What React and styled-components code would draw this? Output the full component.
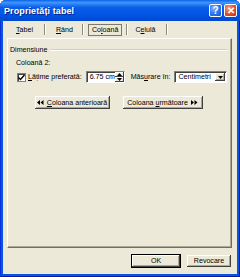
import React from 'react'
import styled, { createGlobalStyle } from 'styled-components'

const GlobalStyle = createGlobalStyle`
html, body {
  margin: 0;
  padding: 0;
  background: #ffffff;
}
* {
  box-sizing: border-box;
}
`

const Window = styled.div`
width: 240px;
height: 277px;
display: flex;
flex-direction: column;
background: #0a55e0;
border-radius: 6px 6px 0 0;
box-shadow: inset 1px 0 #0831d9, inset -1px 0 #001ea0, inset 0 -1px #001ea0;
font-family: "Liberation Sans", Arial, sans-serif;
font-size: 7.1px;
color: #000;
overflow: hidden;
`

const TitleBar = styled.div`
height: 21px;
display: flex;
align-items: center;
padding: 0 3px 0 4px;
background: linear-gradient(#0b62e8 0%, #3d95ff 12%, #0a5ee6 35%, #0055e5 70%, #0048d0 100%);
`

const Title = styled.div`
flex: 1;
color: #ffffff;
font-size: 9px;
font-weight: bold;
text-shadow: 1px 1px #0a1e80;
letter-spacing: 0.1px;
`

const CaptionButton = styled.div`
width: 13px;
height: 13px;
margin-left: 2px;
border: 1px solid #ffffff;
border-radius: 2px;
display: flex;
align-items: center;
justify-content: center;
color: #ffffff;
font-weight: bold;
font-size: 10px;
line-height: 1;
background: ${p => p.$close
  ? 'radial-gradient(circle at 35% 30%, #f0a080, #e0502a 55%, #c03010)'
  : 'radial-gradient(circle at 35% 30%, #7eb4ff, #2c73f0 55%, #1850d0)'};
`

const Client = styled.div`
flex: 1;
margin: 0 3px 3px 3px;
background: #ece9d8;
display: flex;
flex-direction: column;
`

const TabStrip = styled.div`
height: 17px;
display: flex;
align-items: center;
padding-left: 9px;
`

const Tab = styled.div`
padding: 1px 3px;
border: 1px solid ${p => (p.$active ? '#7a7a70' : 'transparent')};
line-height: 8px;
`

const TabSep = styled.div`
width: 1px;
height: 11px;
margin: 0 ${p => p.$m || 6}px;
background: #8c8a80;
box-shadow: 1px 0 #ffffff;
`

const Key = styled.span`
text-decoration: underline;
`

const Panel = styled.div`
flex: 1;
margin: 0 5px 0 4px;
padding: 3px 4px 0 2px;
border-top: 1px solid #ffffff;
border-left: 1px solid #ffffff;
border-right: 1px solid #716f64;
border-bottom: 1px solid #716f64;
box-shadow: inset -1px -1px #aca899;
display: flex;
flex-direction: column;
`

const GroupHeader = styled.div`
display: flex;
align-items: center;
height: 11px;
margin-top: 2px;
`

const GroupLine = styled.div`
flex: 1;
height: 2px;
margin-left: 3px;
border-top: 1px solid #d0d0bf;
border-bottom: 1px solid #ffffff;
`

const Caption = styled.div`
margin: 3px 0 0 6px;
height: 10px;
line-height: 10px;
`

const ControlRow = styled.div`
display: flex;
align-items: center;
margin: 2px 0 0 7px;
height: 14px;
`

const CheckBox = styled.div`
width: 9px;
height: 9px;
background: #ffffff;
border: 1px solid #808080;
box-shadow: inset 1px 1px #404040;
display: flex;
align-items: center;
justify-content: center;
margin-right: 2px;
`

const Label = styled.span`
white-space: nowrap;
margin-right: ${p => p.$gap || 0}px;
`

const Field = styled.div`
display: flex;
align-items: stretch;
width: ${p => p.$w}px;
height: 12px;
background: #ffffff;
border-top: 1px solid #808080;
border-left: 1px solid #808080;
border-right: 1px solid #ffffff;
border-bottom: 1px solid #ffffff;
box-shadow: inset 1px 1px #404040;
margin-right: ${p => p.$gap || 0}px;
`

const FieldText = styled.div`
flex: 1;
padding: 1px 0 0 3px;
line-height: 9px;
white-space: nowrap;
overflow: hidden;
`

const Spinner = styled.div`
width: 9px;
display: flex;
flex-direction: column;
`

const SpinButton = styled.div`
flex: 1;
background: #ece9d8;
box-shadow: inset -1px -1px #404040, inset 1px 1px #ffffff;
display: flex;
align-items: center;
justify-content: center;
`

const DropButton = styled.div`
width: 10px;
margin: 1px;
background: #ece9d8;
box-shadow: inset -1px -1px #404040, inset 1px 1px #ffffff, inset -2px -2px #aca899;
display: flex;
align-items: center;
justify-content: center;
`

const NavRow = styled.div`
display: flex;
justify-content: center;
gap: 11px;
margin-top: 11px;
`

const Button = styled.div`
height: ${p => p.$h || 15}px;
width: ${p => p.$w}px;
display: flex;
align-items: center;
justify-content: center;
gap: 3px;
background: #ece9d8;
border: 1px solid ${p => (p.$default ? '#000000' : '#ece9d8')};
box-shadow: inset -1px -1px #404040, inset 1px 1px #ffffff, inset -2px -2px #aca899;
white-space: nowrap;
`

const Footer = styled.div`
height: 26px;
display: flex;
align-items: center;
justify-content: flex-end;
gap: 5px;
padding-right: 5px;
`

const Tri = ({ dir }) => (
  <svg width="5" height="3" viewBox="0 0 5 3">
    {dir === 'up'
      ? <path d="M2.5 0 L5 3 L0 3 Z" fill="#000" />
      : <path d="M0 0 L5 0 L2.5 3 Z" fill="#000" />}
  </svg>
)

const Double = ({ dir }) => (
  <svg width="7" height="5" viewBox="0 0 7 5">
    {dir === 'left'
      ? <path d="M0 2.5 L3 0 L3 5 Z M3.5 2.5 L6.5 0 L6.5 5 Z" fill="#000" />
      : <path d="M0 0 L3 2.5 L0 5 Z M3.5 0 L6.5 2.5 L3.5 5 Z" fill="#000" />}
  </svg>
)

const tabs = [
  { label: 'Tabel', key: 'T', rest: 'abel', m: 7 },
  { label: 'Rând', key: 'R', rest: 'ând', m: 5 },
  { label: 'Coloană', pre: 'Co', key: 'l', rest: 'oană', active: true, m: 4 },
  { label: 'Celulă', pre: 'C', key: 'e', rest: 'lulă', m: 6 },
]

const App = () => {
  return (
    <>
      <GlobalStyle />
      <Window>
        <TitleBar>
          <Title>Proprietăți tabel</Title>
          <CaptionButton>?</CaptionButton>
          <CaptionButton $close>✕</CaptionButton>
        </TitleBar>
        <Client>
          <TabStrip>
            {tabs.map(t => (
              <React.Fragment key={t.label}>
                <Tab $active={t.active}>
                  {t.pre}<Key>{t.key}</Key>{t.rest}
                </Tab>
                <TabSep $m={t.m} />
              </React.Fragment>
            ))}
          </TabStrip>
          <Panel>
            <GroupHeader>
              <span>Dimensiune</span>
              <GroupLine />
            </GroupHeader>
            <Caption>Coloană 2:</Caption>
            <ControlRow>
              <CheckBox>
                <svg width="7" height="7" viewBox="0 0 7 7">
                  <path d="M0.5 3.5 L2.5 5.5 L6.5 1" stroke="#000" strokeWidth="1.4" fill="none" />
                </svg>
              </CheckBox>
              <Label $gap={4}><Key>L</Key>ățime preferată:</Label>
              <Field $w={39} $gap={6}>
                <FieldText>6.75 cm</FieldText>
                <Spinner>
                  <SpinButton><Tri dir="up" /></SpinButton>
                  <SpinButton><Tri dir="down" /></SpinButton>
                </Spinner>
              </Field>
              <Label $gap={4}>Măs<Key>u</Key>rare în:</Label>
              <Field $w={55}>
                <FieldText>Centimetri</FieldText>
                <DropButton><Tri dir="down" /></DropButton>
              </Field>
            </ControlRow>
            <NavRow>
              <Button $w={77}>
                <Double dir="left" />
                <span><Key>C</Key>oloana anterioară</span>
              </Button>
              <Button $w={82}>
                <span>Coloana <Key>u</Key>rmătoare</span>
                <Double dir="right" />
              </Button>
            </NavRow>
          </Panel>
          <Footer>
            <Button $w={50} $h={14} $default>OK</Button>
            <Button $w={46} $h={14}>Revocare</Button>
          </Footer>
        </Client>
      </Window>
    </>
  )
}

export default App
